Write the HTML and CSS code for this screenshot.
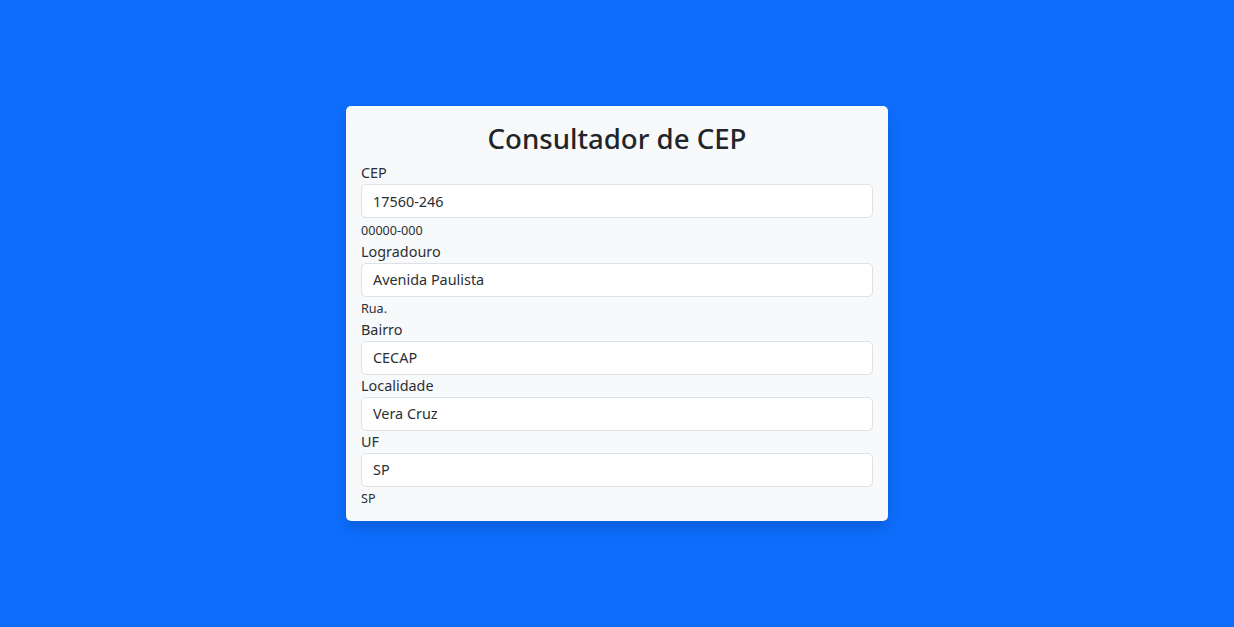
FILE: index.html
```html
<!DOCTYPE html>
<html lang="pt-BR">
<head>
<meta charset="utf-8">
<title>Consultador de CEP</title>
<link rel="stylesheet" href="styles.css">
</head>
<body>
<main class="page">
  <form class="card">
    <h2 class="title">Consultador de CEP</h2>
    <div class="field">
      <label class="label" for="cep">CEP</label>
      <input class="input" id="cep" type="text" value="17560-246">
      <div class="help">00000-000</div>
    </div>
    <div class="field">
      <label class="label" for="logradouro">Logradouro</label>
      <input class="input" id="logradouro" type="text" value="Avenida Paulista">
      <div class="help">Rua.</div>
    </div>
    <div class="field">
      <label class="label" for="bairro">Bairro</label>
      <input class="input" id="bairro" type="text" value="CECAP">
    </div>
    <div class="field">
      <label class="label" for="localidade">Localidade</label>
      <input class="input" id="localidade" type="text" value="Vera Cruz">
    </div>
    <div class="field">
      <label class="label" for="uf">UF</label>
      <input class="input" id="uf" type="text" value="SP">
      <div class="help">SP</div>
    </div>
  </form>
</main>
</body>
</html>
```

FILE: styles.css
```css
* { box-sizing: border-box; }
html, body {
  margin: 0;
  height: 100%;
}
body {
  background: #0d6efd;
  font-family: "Noto Sans", "Open Sans", sans-serif;
  font-size: 14.4px;
  line-height: 1.5;
  color: #212529;
}
.page {
  height: 100%;
  display: flex;
  align-items: center;
  justify-content: center;
}
.card {
  width: 542px;
  background: #f8f9fa;
  border-radius: 5px;
  padding: 15px 15px 12px;
  box-shadow: 0 7px 14px rgba(0, 0, 0, 0.15);
  display: flex;
  flex-direction: column;
}
.title {
  margin: 0 0 7px;
  font-size: 27.6px;
  font-weight: 500;
  line-height: 34.6px;
  text-align: center;
  color: #212529;
}
.field {
  display: flex;
  flex-direction: column;
}
.label {
  display: block;
  line-height: 22px;
  color: #2b3035;
}
.input {
  display: block;
  width: 100%;
  height: 34px;
  padding: 5px 11px;
  font: inherit;
  color: #2b3035;
  background: #fff;
  border: 1px solid #dee2e6;
  border-radius: 5px;
  outline: none;
}
.help {
  margin-top: 3.5px;
  font-size: 12.6px;
  line-height: 1.5;
  color: #2b3035;
}
```
